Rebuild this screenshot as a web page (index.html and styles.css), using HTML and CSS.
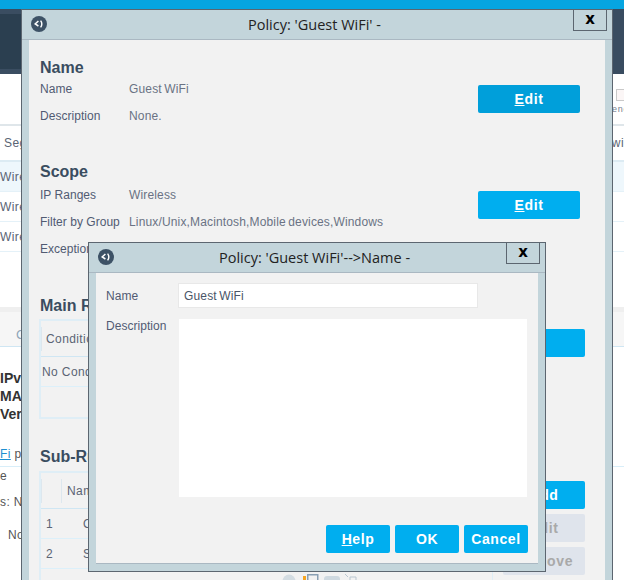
FILE: index.html
```html
<!DOCTYPE html>
<html lang="en">
<head>
<meta charset="utf-8">
<title>Policy: 'Guest WiFi'</title>
<link rel="stylesheet" href="styles.css">
</head>
<body>
<div class="page">
  <div class="topbar"></div>
  <div class="nav"><div class="nav-left"></div><div class="nav-right"></div></div>
  <div class="toolbar">
    <div class="tool-check"></div>
    <div class="tool-label">ene</div>
  </div>
  <div class="bg-row bg-head"><span class="seg">Seg</span><span>wi</span></div>
  <div class="bg-row bg-sel"><span>Wire</span></div>
  <div class="bg-row"><span>Wire</span></div>
  <div class="bg-row"><span>Wire</span></div>
  <div class="bg-gap"></div>
  <div class="bg-tabs"><span>C</span></div>
  <div class="bg-detail">
    <b>IPv</b><b>MA</b><b>Ver</b>
  </div>
  <div class="bg-link"><a>Fi</a> po</div>
  <div class="bg-lines">
    <div>e</div>
    <div class="l2">s: No</div>
    <div class="l3">No</div>
  </div>

  <section class="dialog outer">
    <header class="titlebar">
      <svg class="back" width="16" height="16" viewBox="0 0 16 16"><circle cx="8" cy="8" r="8" fill="#3d5266"/><path d="M7.4 5 4.200 8l3.200 2" fill="none" stroke="#fff" stroke-width="1.500"/><path d="M9.600 4.600c1.500 2 1.500 4.700 0 6.800" fill="none" stroke="#fff" stroke-width="1.400"/></svg>
      <h1 class="title">Policy: 'Guest WiFi' -</h1>
      <button class="close">x</button>
    </header>
    <div class="body outer-body">
      <div class="section s-name">
        <div>
          <h2>Name</h2>
          <dl class="fields">
            <dt>Name</dt><dd>Guest WiFi</dd>
            <dt>Description</dt><dd>None.</dd>
          </dl>
        </div>
        <button class="btn edit-hover"><u>E</u>dit</button>
      </div>
      <div class="section s-scope">
        <div>
          <h2>Scope</h2>
          <dl class="fields">
            <dt>IP Ranges</dt><dd>Wireless</dd>
            <dt>Filter by Group</dt><dd>Linux/Unix,Macintosh,Mobile devices,Windows</dd>
            <dt>Exceptions</dt><dd></dd>
          </dl>
        </div>
        <button class="btn"><u>E</u>dit</button>
      </div>
      <div class="section-table s-main">
        <h2>Main Rule</h2>
        <div class="table-row">
          <div class="table main-table">
            <div class="thead"><span class="sep">Condition</span></div>
            <div class="tr nocond">No Conditions</div>
          </div>
          <div class="actions"><button class="btn small wide"><u>E</u>dit</button></div>
        </div>
      </div>
      <div class="section-table s-sub">
        <h2>Sub-Rules</h2>
        <div class="table-row">
          <div class="table sub-table">
            <div class="thead"><span class="sep c1"></span><span class="sep">Name</span></div>
            <div class="tr"><span class="num">1</span><span>O</span></div>
            <div class="tr"><span class="num">2</span><span>S</span></div>
            <div class="pager">
              <svg width="76" height="8" viewBox="0 0 76 8">
                <circle cx="7" cy="7" r="6.500" fill="#d3dce2"/>
                <rect x="21" y="2" width="3" height="6" fill="#f6a623"/>
                <rect x="25.750" y="0.750" width="10" height="10" fill="none" stroke="#8aa0b4" stroke-width="1.500"/>
                <rect x="42" y="2" width="16" height="8" rx="3" fill="#cfd9e0"/>
                <path d="M63 0l3 3M68 3h6v5h-6z" fill="none" stroke="#b9c6d0"/>
              </svg>
            </div>
          </div>
          <div class="actions stack">
            <button class="btn small"><u>A</u>dd</button>
            <button class="btn small off">Edit</button>
            <button class="btn small off">Remove</button>
          </div>
        </div>
      </div>
    </div>
  </section>

  <section class="dialog inner">
    <header class="titlebar">
      <svg class="back" width="16" height="16" viewBox="0 0 16 16"><circle cx="8" cy="8" r="8" fill="#3d5266"/><path d="M7.400 5 4.200 8l3.200 2" fill="none" stroke="#fff" stroke-width="1.500"/><path d="M9.600 4.600c1.500 2 1.500 4.700 0 6.800" fill="none" stroke="#fff" stroke-width="1.400"/></svg>
      <h1 class="title">Policy: 'Guest WiFi'--&gt;Name -</h1>
      <button class="close">x</button>
    </header>
    <div class="body inner-body">
      <div class="form-row">
        <label>Name</label>
        <div class="input">Guest WiFi</div>
      </div>
      <div class="form-row area-row">
        <label>Description</label>
        <div class="textarea"></div>
      </div>
      <div class="buttons">
        <button class="btn act"><u>H</u>elp</button>
        <button class="btn act">OK</button>
        <button class="btn act">Cancel</button>
      </div>
    </div>
  </section>
</div>
</body>
</html>
```

FILE: styles.css
```css
* { box-sizing: border-box; }
html, body { margin: 0; padding: 0; }
body { font-family: "Liberation Sans", Arial, sans-serif; font-size: 12px; color: #4f5a70; background: #fff; }
.page { position: relative; width: 624px; height: 580px; overflow: hidden; background: #fff; }

.topbar { height: 9px; background: #06a5e1; }
.nav { height: 65px; display: flex; justify-content: space-between; }
.nav-left { width: 22px; background: #2b3f50; border-top: 5px solid #3a4d61; border-bottom: 5px solid #3a4d61; }
.nav-right { width: 12px; background: #394c60; }
.toolbar { height: 52px; border-bottom: 2px solid #dfe6ea; position: relative; }
.tool-check { position: absolute; left: 616px; top: 15px; width: 12px; height: 12px; border: 1px solid #c9c9c9; background: #fbf6f6; }
.tool-label { position: absolute; left: 612px; top: 30px; font-size: 9px; letter-spacing: .8px; color: #77818f; }
.bg-row { height: 30px; display: flex; justify-content: space-between; align-items: center; border-bottom: 1px solid #e4f1f8; font-size: 12px; letter-spacing: .4px; color: #5a6474; }
.bg-head { height: 36px; border-bottom: 2px solid #dcebf3; }
.bg-head .seg { margin-left: 4px; }
.bg-sel { background: #eef7fc; }
.bg-gap { height: 60px; border-bottom: 5px solid #efefef; }
.bg-tabs { height: 35px; background: #f6f6f6; border-bottom: 1px solid #cfe6f3; padding: 15px 0 0 16px; color: #8fa5b8; font-size: 13px; }
.bg-detail { display: flex; flex-direction: column; padding-top: 22px; font-size: 14px; line-height: 18px; color: #333; }
.bg-link { margin-top: 22px; height: 22px; padding-top: 2px; border-bottom: 1px solid #d8eef9; font-size: 12px; color: #555; letter-spacing: .4px; }
.bg-link a { color: #1f8fd0; text-decoration: underline; }
.bg-lines { color: #555; font-size: 12px; padding-top: 2px; letter-spacing: .4px; }
.bg-lines .l2 { margin-top: 12px; }
.bg-lines .l3 { margin-top: 19px; margin-left: 8px; }

.dialog { position: absolute; display: flex; flex-direction: column; background: #c3d5db; border: 1px solid #5c6670; }
.outer { left: 21px; top: 9px; width: 592px; height: 600px; padding: 0 7px; }
.inner { left: 88px; top: 242px; width: 458px; height: 330px; padding: 0 7px 7px; }
.titlebar { height: 30px; flex: none; position: relative; display: flex; align-items: center; justify-content: center; border-bottom: 1px solid #aab8c2; margin: 0 -7px; padding: 0 7px; }
.back { position: absolute; left: 9px; top: 6px; }
.title { margin: 0; font-family: "Open Sans", sans-serif; font-weight: 400; font-size: 14.5px; color: #222; padding-right: 5px; }
.close { position: absolute; right: 5px; top: -1px; width: 34px; height: 22px; padding: 0 0 4px; background: #c3d5db; border: 1px solid #5c6670; font: bold 15px "DejaVu Sans", sans-serif; color: #000; }
.body { background: #f2f2f2; flex: 1; min-height: 0; }

.outer-body { padding: 18px 25px 0 11px; }
h2 { margin: 0; font-size: 16px; line-height: 20px; font-weight: bold; color: #3a4d60; }
.section { display: flex; justify-content: space-between; }
.s-name { height: 104px; }
.s-scope { height: 134px; }
.fields { display: grid; grid-template-columns: 89px 1fr; margin: -3px 0 0; grid-auto-rows: 27px; align-items: center; font-size: 12px; }
.s-scope .fields { margin-top: -1px; }
.fields dt { color: #515b72; letter-spacing: .03px; }
.fields dd { margin: 0; color: #6a7284; white-space: nowrap; letter-spacing: .15px; word-spacing: -1px; }
.btn { border: 0; border-radius: 2px; background: #00aeef; color: #fff; height: 28px; font: bold 14px "Liberation Sans", Arial, sans-serif; letter-spacing: .6px; padding: 0; }
.s-name .btn { width: 102px; margin-top: 27px; flex: none; }
.s-scope .btn { width: 102px; margin-top: 29px; flex: none; }
.edit-hover { background: #009fda; }

.s-main { height: 151px; }
.table-row { display: flex; margin-left: -1px; margin-top: 3px; margin-right: -5px; }
.s-sub .table-row { margin-top: 4px; }
.table { width: 454px; flex: none; border: 2px solid #dfeef6; border-right: 1px solid #dfeef6; border-bottom: 0; }
.main-table { width: 429px; height: 100px; border-bottom: 2px solid #dfeef6; }
.thead { height: 36px; padding: 6px 0; display: flex; border-bottom: 1px solid #cfe6f3; color: #5a6474; letter-spacing: .4px; }
.thead .sep { border-left: 1px solid #dde7ee; padding: 5px 0 0 4px; height: 24px; }
.sub-table .thead .sep { padding-left: 5px; }
.thead .c1 { width: 20px; }
.tr { height: 30px; display: flex; align-items: center; padding-left: 1px; border-bottom: 1px solid #dcf0fa; color: #5a6474; letter-spacing: .4px; }
.tr .num { width: 41px; padding-left: 4px; }
.actions { margin-left: 10px; padding-top: 10px; }
.stack { display: flex; flex-direction: column; gap: 5px; }
.btn.small { width: 82px; display: block; }
.btn.wide { width: 107px; }
.btn.off { background: #dfe4ec; color: #a9a9a9; }
.sub-table { height: 110px; }
.pager { height: 8px; margin: 5px 0 0 241px; }
.pager svg { display: block; }

.inner-body { padding: 10px 10px 0; display: flex; flex-direction: column; border-bottom: 1px solid #aab8c2; }
.form-row { display: flex; align-items: center; }
.form-row label { width: 72px; color: #515b72; letter-spacing: .03px; }
.input { width: 300px; height: 25px; background: #fff; border: 1px solid #e8e8e8; padding: 0 5px; line-height: 24px; color: #4a5568; letter-spacing: .15px; word-spacing: -1px; }
.area-row { margin-top: 11px; align-items: flex-start; }
.textarea { width: 348px; height: 178px; background: #fff; margin-left: 1px; }
.buttons { display: flex; justify-content: flex-end; gap: 5px; margin-top: 28px; }
.btn.act { width: 64px; }
```
